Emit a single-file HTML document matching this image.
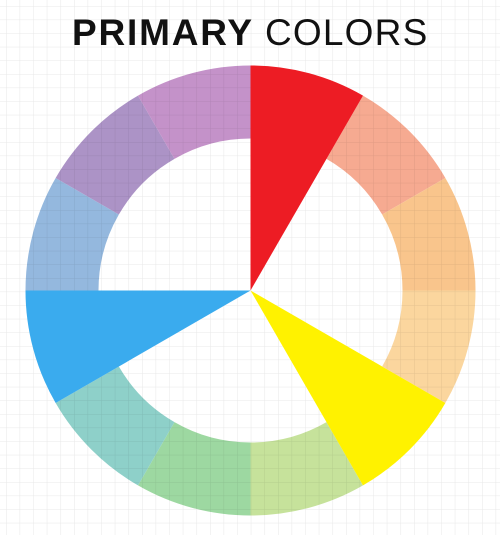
<!DOCTYPE html>
<html><head><style>
html,body{margin:0;padding:0;background:#fff;}
body{width:500px;height:535px;position:relative;overflow:hidden;}
.t{position:absolute;top:13px;left:0;width:500px;font-family:"Liberation Sans",sans-serif;font-size:37px;line-height:40px;white-space:nowrap;}
</style></head><body>
<svg width="500" height="535" style="position:absolute;left:0;top:0">
<defs>
<pattern id="g" x="6" y="6" width="13.6" height="13.6" patternUnits="userSpaceOnUse">
<path d="M0 0H13.6M0 0V13.6" stroke="#000" stroke-opacity="0.09" stroke-width="1" fill="none"/>
</pattern>
</defs>
<g id="w"></g>
<rect width="500" height="535" fill="url(#g)"/>
<g id="s"></g>
</svg>
<div class="t"><span style="position:absolute;left:72px;font-weight:bold;letter-spacing:1.8px;color:#111">PRIMARY</span><span style="position:absolute;left:265px;letter-spacing:1.2px;color:#111;font-weight:normal">COLORS</span></div>
<script>
var cx=250.5,cy=290.5,R=225,r=152;
var cols=["#ed1c24","#f6aa91","#f9c58c","#fbd69e","#fff200","#c6e29b","#9dd8a1","#8ed0c9","#3aabee","#94b8de","#ac93c6","#c492c9"];
var full={0:1,4:1,8:1};
function p(a,rr){var t=a*Math.PI/180;return [(cx+rr*Math.sin(t)).toFixed(2),(cy-rr*Math.cos(t)).toFixed(2)];}
var w="",s="";
for(var i=0;i<12;i++){var a0=i*30,a1=a0+30,d;
 var o0=p(a0,R),o1=p(a1,R);
 if(full[i]){d="M"+cx+" "+cy+"L"+o0+"A"+R+" "+R+" 0 0 1 "+o1+"Z";s+='<path d="'+d+'" fill="'+cols[i]+'"/>';}
 else{var i0=p(a0,r),i1=p(a1,r);d="M"+i0+"L"+o0+"A"+R+" "+R+" 0 0 1 "+o1+"L"+i1+"A"+r+" "+r+" 0 0 0 "+i0+"Z";w+='<path d="'+d+'" fill="'+cols[i]+'"/>';}
}
document.getElementById("w").innerHTML=w;document.getElementById("s").innerHTML=s;
</script>
</body></html>
